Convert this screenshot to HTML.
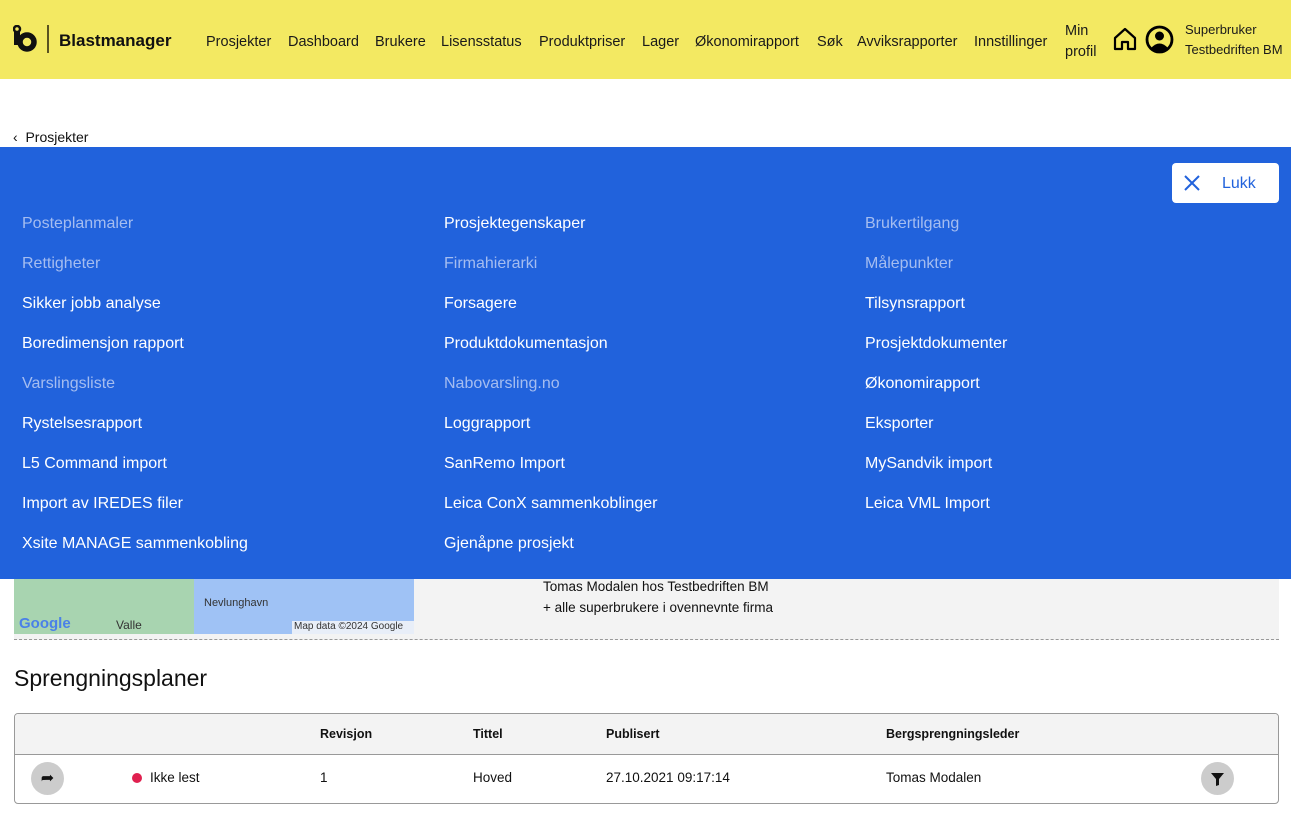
<!DOCTYPE html>
<html><head><meta charset="utf-8"><style>
*{box-sizing:border-box;margin:0;padding:0}
body{width:1291px;height:816px;overflow:hidden;background:#fff;font-family:"Liberation Sans",sans-serif;color:#111;position:relative}
.hdr{position:absolute;left:0;top:0;width:1291px;height:79px;background:#f3e962}
.hdr .t{position:absolute;font-size:14.5px;color:#1a1a1a}
.menu{position:absolute;left:0;top:147px;width:1291px;height:432px;background:#2162dc}
.menu .i{position:absolute;font-size:16px;color:#fff;line-height:20px;margin-top:2px}
.menu .d{color:#a5bdf0}
.grey{position:absolute;left:14px;top:579px;width:1265px;height:61px;background:#f3f3f3;border-bottom:1px dashed #999}
.tbl{position:absolute;left:14px;top:713px;width:1265px;height:91px;border:1px solid #999;border-radius:4px;overflow:hidden}
.th{height:41px;background:#f3f3f3;border-bottom:1px solid #999}
.c{position:absolute;font-size:13.5px}
</style></head><body>
<div class="hdr">
<svg style="position:absolute;left:13px;top:25px" width="26" height="27" viewBox="0 0 26 27"><circle cx="4" cy="4" r="3" fill="none" stroke="#111" stroke-width="2.5"/><path d="M4 7 V20" stroke="#111" stroke-width="6"/><circle cx="14" cy="17" r="7" fill="none" stroke="#111" stroke-width="5.5"/></svg>
<div style="position:absolute;left:47px;top:25px;width:2px;height:28px;background:#5a5320"></div>
<div class="t" style="left:59px;top:31px;font-size:17px;font-weight:bold;color:#111">Blastmanager</div>
<div class="t" style="left:206px;top:34px">Prosjekter</div>
<div class="t" style="left:288px;top:34px">Dashboard</div>
<div class="t" style="left:375px;top:34px">Brukere</div>
<div class="t" style="left:441px;top:34px">Lisensstatus</div>
<div class="t" style="left:539px;top:34px">Produktpriser</div>
<div class="t" style="left:642px;top:34px">Lager</div>
<div class="t" style="left:695px;top:34px">Økonomirapport</div>
<div class="t" style="left:817px;top:34px">Søk</div>
<div class="t" style="left:857px;top:34px">Avviksrapporter</div>
<div class="t" style="left:974px;top:34px">Innstillinger</div>
<div class="t" style="left:1065px;top:21px;line-height:21px">Min<br>profil</div>
<svg style="position:absolute;left:1113px;top:27px" width="24" height="24" viewBox="0 0 24 24"><path d="M2 11 L12 2 L22 11 V22 H15 V15 H9 V22 H2 Z" fill="none" stroke="#000" stroke-width="2.2" stroke-linejoin="round"/></svg>
<svg style="position:absolute;left:1145px;top:25px" width="29" height="29" viewBox="0 0 29 29"><circle cx="14.5" cy="14.5" r="12.5" fill="none" stroke="#000" stroke-width="2.8"/><circle cx="14.5" cy="11" r="4.5" fill="#000"/><path d="M6 23 Q14.5 14 23 23 Q14.5 29 6 23Z" fill="#000"/></svg>
<div class="t" style="left:1185px;top:20px;font-size:13px;line-height:20px">Superbruker<br>Testbedriften BM</div>
</div>
<div style="position:absolute;left:13px;top:129px;font-size:14px">‹&nbsp;&nbsp;Prosjekter</div>
<div class="grey">
<div style="position:absolute;left:0;top:0;width:400px;height:55px;background:#a8d4b0"></div>
<div style="position:absolute;left:180px;top:0;width:220px;height:55px;background:#9fc2f5"></div>
<div style="position:absolute;left:5px;top:36px;font-size:15px;font-weight:bold;color:#4a80e8">Google</div>
<div style="position:absolute;left:102px;top:39px;font-size:12px;color:#333">Valle</div>
<div style="position:absolute;left:190px;top:18px;font-size:11px;color:#333">Nevlunghavn</div>
<div style="position:absolute;left:278px;top:42px;width:122px;height:13px;background:#e8eef8;font-size:10px;color:#333;padding-left:2px">Map data ©2024 Google</div>
<div style="position:absolute;left:529px;top:-3px;font-size:13.5px;line-height:21px">Tomas Modalen hos Testbedriften BM<br>+ alle superbrukere i ovennevnte firma</div>
</div>
<div style="position:absolute;left:14px;top:665px;font-size:23px">Sprengningsplaner</div>
<div class="tbl"><div class="th"></div>
<div class="c" style="left:305px;top:13px;font-weight:bold;font-size:12.5px">Revisjon</div>
<div class="c" style="left:458px;top:13px;font-weight:bold;font-size:12.5px">Tittel</div>
<div class="c" style="left:591px;top:13px;font-weight:bold;font-size:12.5px">Publisert</div>
<div class="c" style="left:871px;top:13px;font-weight:bold;font-size:12.5px">Bergsprengningsleder</div>
<div style="position:absolute;left:16px;top:48px;width:33px;height:33px;border-radius:50%;background:#ccc;font-size:16px;text-align:center;line-height:33px">➦</div>
<div style="position:absolute;left:117px;top:59px;width:10px;height:10px;border-radius:50%;background:#e0204f"></div>
<div class="c" style="left:135px;top:56px">Ikke lest</div>
<div class="c" style="left:305px;top:56px">1</div>
<div class="c" style="left:458px;top:56px">Hoved</div>
<div class="c" style="left:591px;top:56px">27.10.2021 09:17:14</div>
<div class="c" style="left:871px;top:56px">Tomas Modalen</div>
<div style="position:absolute;left:1186px;top:48px;width:33px;height:33px;border-radius:50%;background:#ccc"><svg width="33" height="33" viewBox="0 0 33 33"><path d="M10 11 H23 L18 17 V23 L15 24 V17 Z" fill="#111"/></svg></div>
</div>
<div class="menu">
<div style="position:absolute;left:1172px;top:16px;width:107px;height:40px;background:#fff;border-radius:4px">
<svg style="position:absolute;left:12px;top:12px" width="16" height="16"><path d="M1 1L15 15M15 1L1 15" stroke="#2162dc" stroke-width="2"/></svg>
<div style="position:absolute;left:50px;top:12px;font-size:16px;color:#2162dc">Lukk</div></div>
<div class="i d" style="left:22px;top:65px">Posteplanmaler</div>
<div class="i d" style="left:22px;top:105px">Rettigheter</div>
<div class="i" style="left:22px;top:145px">Sikker jobb analyse</div>
<div class="i" style="left:22px;top:185px">Boredimensjon rapport</div>
<div class="i d" style="left:22px;top:225px">Varslingsliste</div>
<div class="i" style="left:22px;top:265px">Rystelsesrapport</div>
<div class="i" style="left:22px;top:305px">L5 Command import</div>
<div class="i" style="left:22px;top:345px">Import av IREDES filer</div>
<div class="i" style="left:22px;top:385px">Xsite MANAGE sammenkobling</div>
<div class="i" style="left:444px;top:65px">Prosjektegenskaper</div>
<div class="i d" style="left:444px;top:105px">Firmahierarki</div>
<div class="i" style="left:444px;top:145px">Forsagere</div>
<div class="i" style="left:444px;top:185px">Produktdokumentasjon</div>
<div class="i d" style="left:444px;top:225px">Nabovarsling.no</div>
<div class="i" style="left:444px;top:265px">Loggrapport</div>
<div class="i" style="left:444px;top:305px">SanRemo Import</div>
<div class="i" style="left:444px;top:345px">Leica ConX sammenkoblinger</div>
<div class="i" style="left:444px;top:385px">Gjenåpne prosjekt</div>
<div class="i d" style="left:865px;top:65px">Brukertilgang</div>
<div class="i d" style="left:865px;top:105px">Målepunkter</div>
<div class="i" style="left:865px;top:145px">Tilsynsrapport</div>
<div class="i" style="left:865px;top:185px">Prosjektdokumenter</div>
<div class="i" style="left:865px;top:225px">Økonomirapport</div>
<div class="i" style="left:865px;top:265px">Eksporter</div>
<div class="i" style="left:865px;top:305px">MySandvik import</div>
<div class="i" style="left:865px;top:345px">Leica VML Import</div>
</div>
</body></html>
